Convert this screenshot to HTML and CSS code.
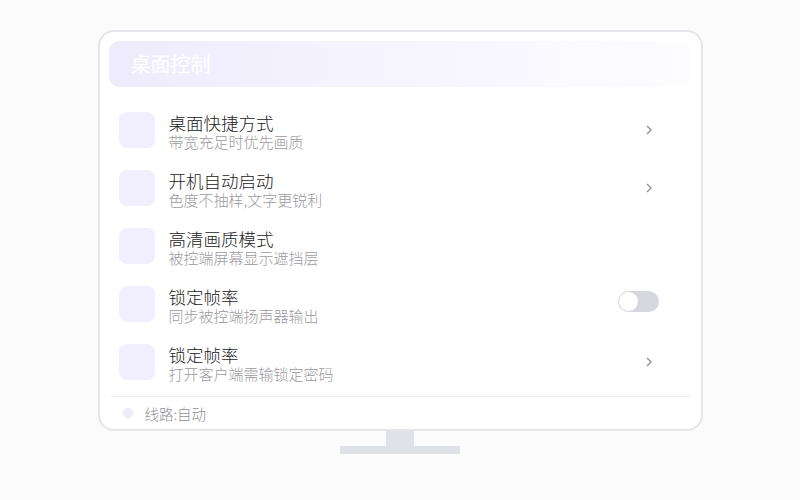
FILE: index.html
```html
<!DOCTYPE html>
<html lang="zh">
<head>
<meta charset="utf-8">
<link rel="stylesheet" href="styles.css">
</head>
<body>
<div class="stage">
  <div class="monitor">
    <div class="header">桌面控制</div>
    <div class="list">
      <div class="row">
        <div class="icon"></div>
        <div class="text"><div class="title">桌面快捷方式</div><div class="sub">带宽充足时优先画质</div></div>
        <svg class="chev" width="8" height="10" viewBox="0 0 8 10"><path d="M2 1 L6 5 L2 9" fill="none" stroke="#8b8e94" stroke-width="1.3"/></svg>
      </div>
      <div class="row">
        <div class="icon"></div>
        <div class="text"><div class="title">开机自动启动</div><div class="sub">色度不抽样,文字更锐利</div></div>
        <svg class="chev" width="8" height="10" viewBox="0 0 8 10"><path d="M2 1 L6 5 L2 9" fill="none" stroke="#8b8e94" stroke-width="1.3"/></svg>
      </div>
      <div class="row">
        <div class="icon"></div>
        <div class="text"><div class="title">高清画质模式</div><div class="sub">被控端屏幕显示遮挡层</div></div>
      </div>
      <div class="row">
        <div class="icon"></div>
        <div class="text"><div class="title">锁定帧率</div><div class="sub">同步被控端扬声器输出</div></div>
        <div class="toggle"><div class="knob"></div></div>
      </div>
      <div class="row">
        <div class="icon"></div>
        <div class="text"><div class="title">锁定帧率</div><div class="sub">打开客户端需输锁定密码</div></div>
        <svg class="chev" width="8" height="10" viewBox="0 0 8 10"><path d="M2 1 L6 5 L2 9" fill="none" stroke="#8b8e94" stroke-width="1.3"/></svg>
      </div>
    </div>
    <div class="divider"></div>
    <div class="footer"><span class="dot"></span><span class="route">线路:自动</span></div>
  </div>
  <div class="neck"></div>
  <div class="base"></div>
</div>
</body>
</html>
```
FILE: styles.css
```css
html, body {
  margin: 0;
  padding: 0;
}
body {
  background: #fbfbfb;
  font-family: "Noto Sans CJK SC", "Noto Sans", sans-serif;
  width: 800px;
  height: 500px;
  overflow: hidden;
}
.stage {
  display: flex;
  flex-direction: column;
  align-items: center;
  padding-top: 30px;
}
.monitor {
  box-sizing: border-box;
  width: 605px;
  height: 401px;
  border: 2px solid #e3e5e9;
  border-radius: 16px;
  background: #fff;
  padding: 9px 9px 0 9px;
  display: flex;
  flex-direction: column;
}
.header {
  height: 46px;
  border-radius: 10px;
  background: linear-gradient(to right, #eeebfc 0%, #f6f5fe 50%, #fdfdff 100%);
  color: #fff;
  font-size: 20px;
  line-height: 46px;
  padding-left: 22px;
  margin-right: 1px;
}
.list {
  display: flex;
  flex-direction: column;
  gap: 22px;
  padding: 25px 0 0 10px;
}
.row {
  display: flex;
  align-items: flex-start;
  height: 36px;
}
.icon {
  width: 36px;
  height: 36px;
  border-radius: 8px;
  background: #f1effd;
  flex: none;
  margin-right: 14px;
}
.text {
  flex: 1;
  padding-top: 1px;
}
.title {
  font-size: 17.5px;
  font-weight: 300;
  line-height: 20px;
  color: #222;
}
.sub {
  font-size: 15px;
  font-weight: 300;
  line-height: 18px;
  color: #9a9a9f;
}
.chev {
  flex: none;
  margin: 13px 39px 0 0;
}
.toggle {
  flex: none;
  width: 41px;
  height: 21px;
  border-radius: 11px;
  background: #d6d8dd;
  margin: 5px 33px 0 0;
  position: relative;
}
.knob {
  position: absolute;
  left: 1px;
  top: 1px;
  width: 19px;
  height: 19px;
  border-radius: 50%;
  background: #fff;
}
.divider {
  height: 1px;
  background: #eeeff1;
  margin: 16px 1px 0 1px;
}
.footer {
  height: 32px;
  display: flex;
  align-items: center;
  padding-left: 14px;
}
.dot {
  width: 10px;
  height: 10px;
  border-radius: 50%;
  background: #ecebfb;
  margin-right: 12px;
}
.route {
  font-size: 14.5px;
  font-weight: 300;
  color: #8f9095;
}
.neck {
  width: 28px;
  height: 15px;
  background: #dfe2e6;
}
.base {
  width: 120px;
  height: 8px;
  background: #dfe2e6;
}
```
